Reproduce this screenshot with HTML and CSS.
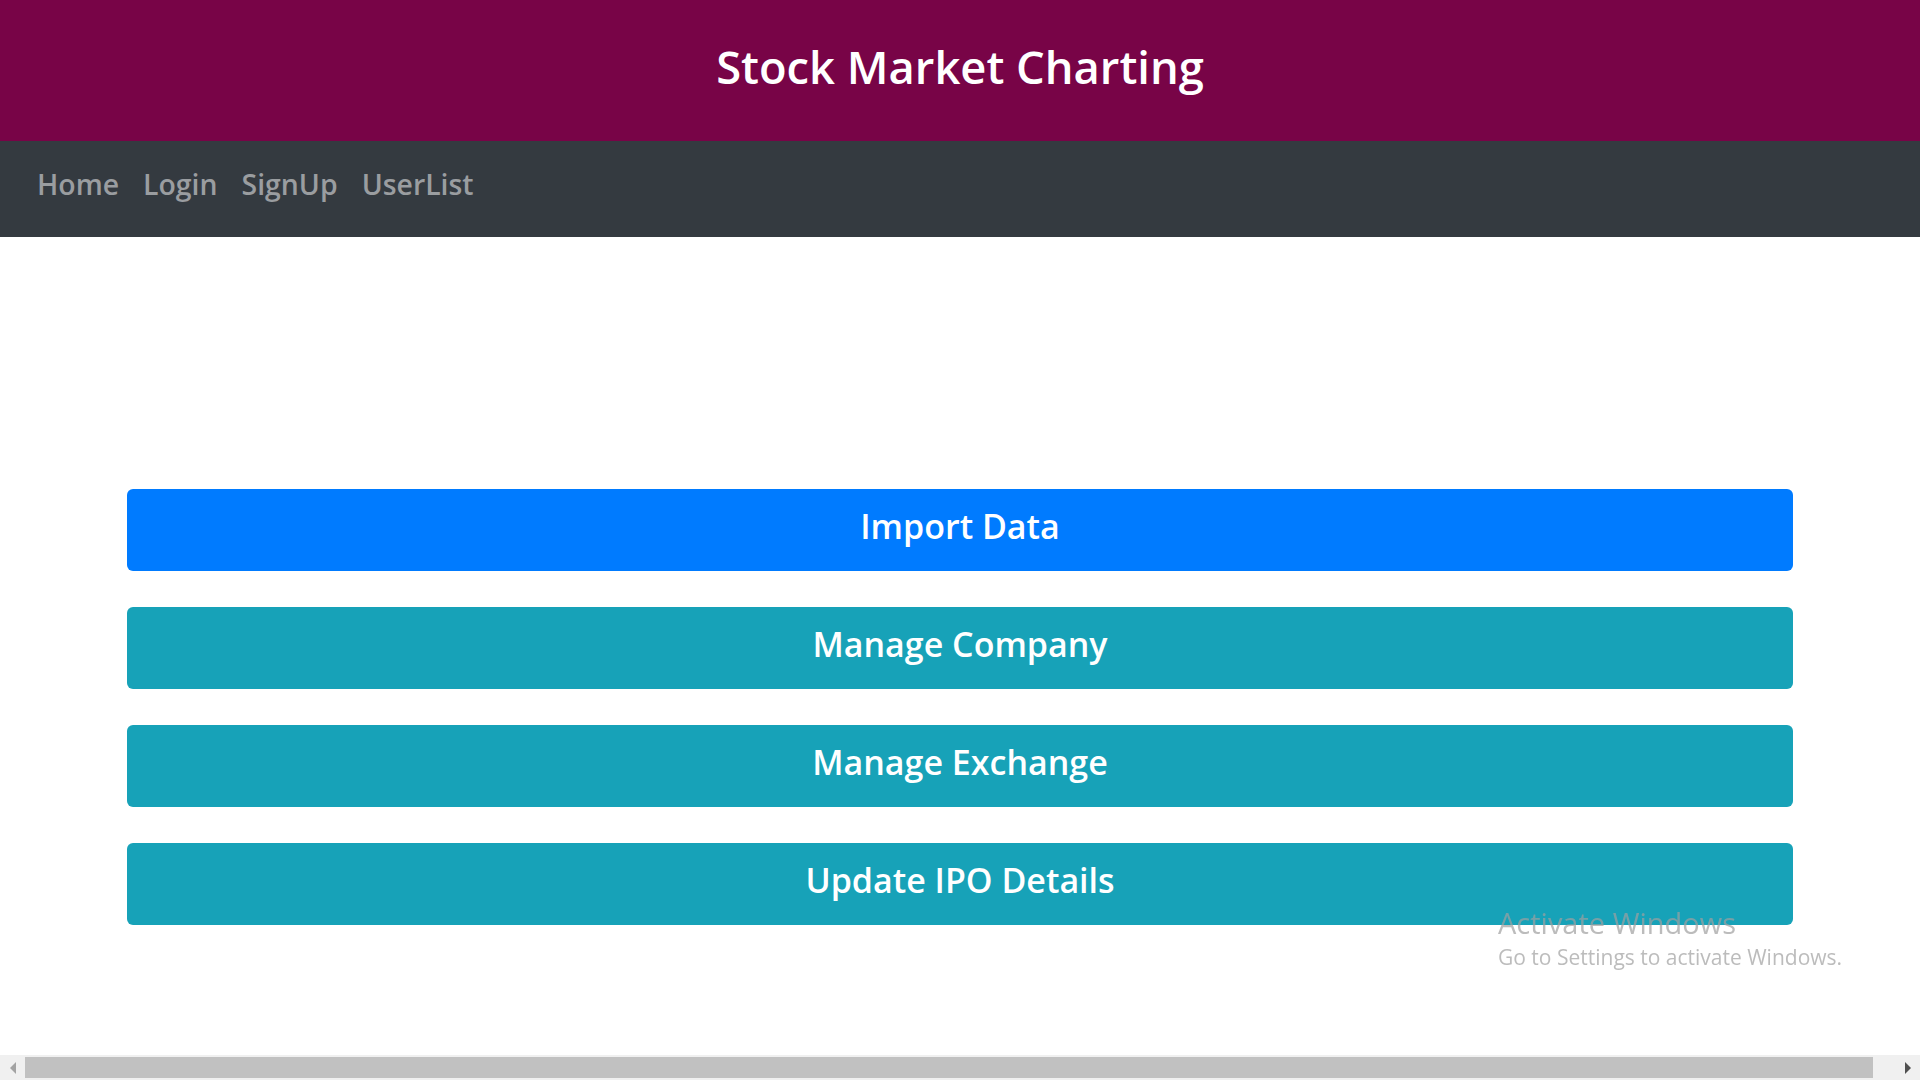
FILE: index.html
```html
<!DOCTYPE html>
<html lang="en">
<head>
<meta charset="utf-8">
<title>Stock Market Charting</title>
<link rel="stylesheet" href="styles.css">
</head>
<body>
<header class="banner">
  <h1 class="banner-title">Stock Market Charting</h1>
</header>
<nav class="topnav">
  <a class="nav-link" href="#">Home</a>
  <a class="nav-link" href="#">Login</a>
  <a class="nav-link" href="#">SignUp</a>
  <a class="nav-link" href="#">UserList</a>
</nav>
<main class="actions">
  <button class="btn btn-primary">Import Data</button>
  <button class="btn btn-info">Manage Company</button>
  <button class="btn btn-info">Manage Exchange</button>
  <button class="btn btn-info">Update IPO Details</button>
</main>
<div class="watermark">
  <div class="wm-title">Activate Windows</div>
  <div class="wm-sub">Go to Settings to activate Windows.</div>
</div>
<div class="hscroll">
  <span class="arrow arrow-left"></span>
  <span class="thumb"></span>
  <span class="arrow arrow-right"></span>
</div>
</body>
</html>
```
FILE: styles.css
```css
html, body {
  margin: 0;
  padding: 0;
  overflow: hidden;
  height: 100%;
}
body {
  font-family: "Open Sans", "Noto Sans", sans-serif;
  background: #ffffff;
}
.banner {
  background: #780447;
  height: 141px;
  display: flex;
  align-items: center;
  justify-content: center;
}
.banner-title {
  margin: 0;
  color: #ffffff;
  font-size: 45.3px;
  font-weight: 600;
  line-height: 1;
  padding-bottom: 8px;
}
.topnav {
  background: #343a40;
  height: 96px;
  display: flex;
  align-items: center;
  padding: 0 0 10px 37px;
  box-sizing: border-box;
  gap: 24px;
}
.nav-link {
  color: #9a9da0;
  text-decoration: none;
  font-size: 28.4px;
  font-weight: 600;
}
.actions {
  padding: 252px 127px 0;
  display: flex;
  flex-direction: column;
  gap: 36px;
}
.btn {
  height: 82px;
  border: none;
  border-radius: 6px;
  color: #ffffff;
  font-family: inherit;
  font-size: 34px;
  font-weight: 600;
  cursor: pointer;
  padding: 0 0 8px;
}
.btn-primary { background: #007bff; }
.btn-info { background: #17a2b8; }
.watermark {
  position: fixed;
  left: 1498px;
  top: 906px;
  color: rgba(160, 160, 160, 0.7);
  font-family: "Open Sans", sans-serif;
  line-height: 1.2;
}
.wm-title { font-size: 29px; }
.wm-sub { font-size: 21px; margin-top: 4px; }
.hscroll {
  position: fixed;
  left: 0;
  right: 0;
  bottom: 0;
  height: 25px;
  background: #f0f0f0;
  display: flex;
  align-items: center;
}
.thumb {
  flex: 1;
  height: 21px;
  background: #c1c1c1;
  margin-right: 22px;
}
.arrow {
  width: 25px;
  display: flex;
  justify-content: center;
  height: 25px;
  align-items: center;
}
.arrow::before {
  content: "";
  border-top: 6px solid transparent;
  border-bottom: 6px solid transparent;
}
.arrow-left::before { border-right: 6px solid #a3a3a3; }
.arrow-right::before { border-left: 6px solid #505050; }
```
